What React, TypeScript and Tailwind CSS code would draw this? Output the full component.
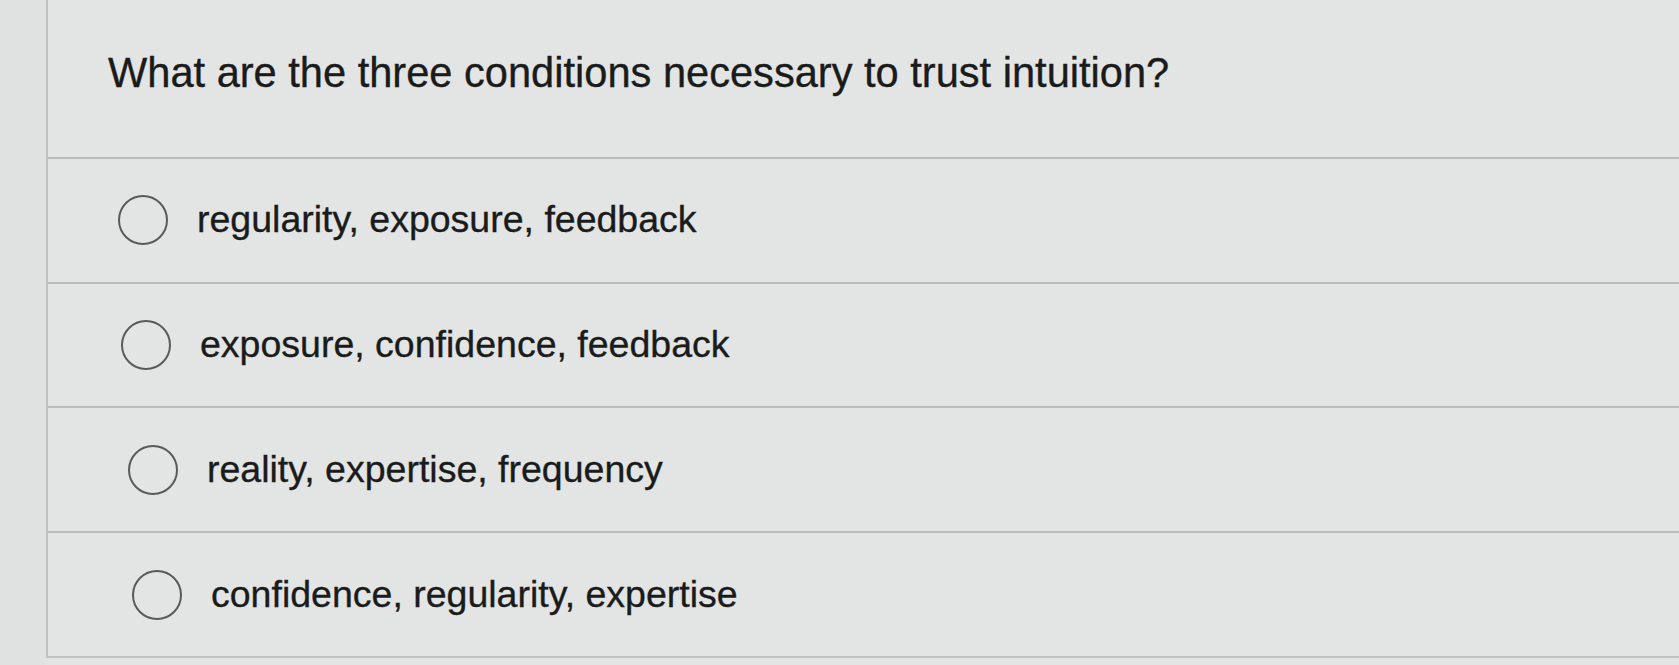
const options = [
  { label: "regularity, exposure, feedback", pad: "pl-[70px]" },
  { label: "exposure, confidence, feedback", pad: "pl-[73px]" },
  { label: "reality, expertise, frequency", pad: "pl-[80px]" },
  { label: "confidence, regularity, expertise", pad: "pl-[84px]" },
];

function Radio() {
  return (
    <span className="block h-[50px] w-[50px] shrink-0 rounded-full border-[2.5px] border-[#585b5b]" />
  );
}

export default function App() {
  return (
    <div
      className="flex h-[665px] w-full overflow-hidden bg-[#e3e5e4] text-[#1a1b1b] [-webkit-text-stroke:0.35px_#1a1b1b]"
      style={{ fontFamily: '"Liberation Sans", Arial, sans-serif' }}
    >
      <div className="w-[46px] shrink-0 bg-[#e0e2e1]" />
      <div className="flex h-[658px] flex-1 flex-col border-b-2 border-l-2 border-[#bfc2c1]">
        <div className="flex h-[157px] items-start pl-[60px] pt-[52px]">
          <h1 className="text-[41.6px] leading-none">
            What are the three conditions necessary to trust intuition?
          </h1>
        </div>
        {options.map((o) => (
          <label
            key={o.label}
            className={`flex h-[125px] items-center gap-[29px] border-t-2 border-[#b9bcbb] ${o.pad}`}
          >
            <Radio />
            <span className="text-[37.5px] leading-none">{o.label}</span>
          </label>
        ))}
      </div>
    </div>
  );
}
